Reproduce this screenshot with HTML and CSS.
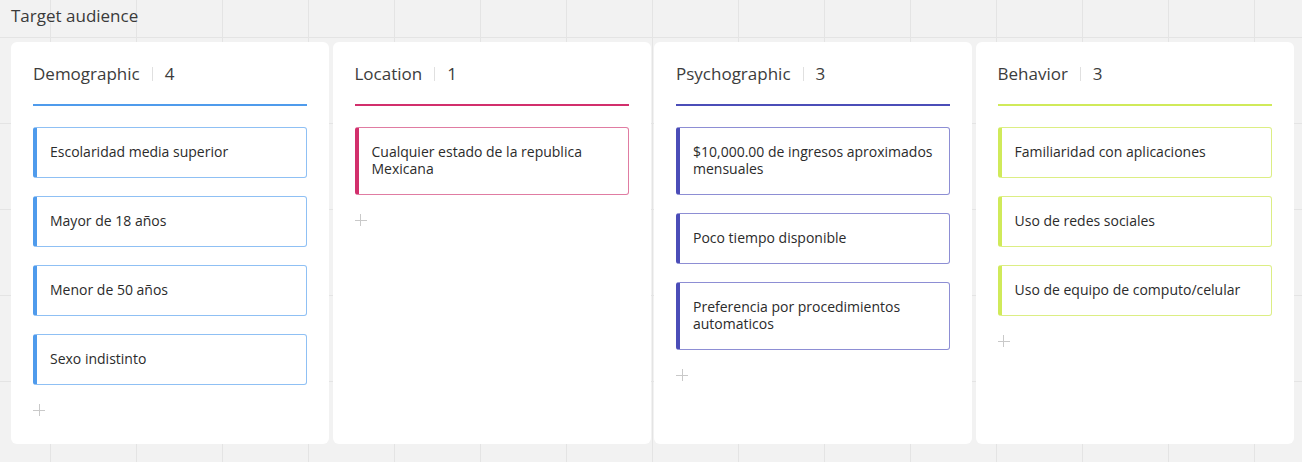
FILE: index.html
```html
<!DOCTYPE html>
<html lang="es">
<head>
<meta charset="utf-8">
<title>Target audience</title>
<link rel="stylesheet" href="styles.css">
</head>
<body>
<div class="frame">
  <div class="frame-title">Target audience</div>
  <div class="board">
    <section class="column col-blue">
      <header class="col-head"><span class="col-name">Demographic</span><span class="sep"></span><span class="count">4</span></header>
      <div class="cards">
        <div class="card">Escolaridad media superior</div>
        <div class="card">Mayor de 18 años</div>
        <div class="card">Menor de 50 años</div>
        <div class="card">Sexo indistinto</div>
      </div>
      <div class="add"></div>
    </section>
    <section class="column col-pink">
      <header class="col-head"><span class="col-name">Location</span><span class="sep"></span><span class="count">1</span></header>
      <div class="cards">
        <div class="card">Cualquier estado de la republica Mexicana</div>
      </div>
      <div class="add"></div>
    </section>
    <section class="column col-indigo">
      <header class="col-head"><span class="col-name">Psychographic</span><span class="sep"></span><span class="count">3</span></header>
      <div class="cards">
        <div class="card">$10,000.00 de ingresos aproximados mensuales</div>
        <div class="card">Poco tiempo disponible</div>
        <div class="card">Preferencia por procedimientos automaticos</div>
      </div>
      <div class="add"></div>
    </section>
    <section class="column col-lime">
      <header class="col-head"><span class="col-name">Behavior</span><span class="sep"></span><span class="count">3</span></header>
      <div class="cards">
        <div class="card">Familiaridad con aplicaciones</div>
        <div class="card">Uso de redes sociales</div>
        <div class="card">Uso de equipo de computo/celular</div>
      </div>
      <div class="add"></div>
    </section>
  </div>
</div>
</body>
</html>
```

FILE: styles.css
```css
html, body {
  margin: 0;
  padding: 0;
}
body {
  width: 1302px;
  height: 462px;
  overflow: hidden;
  font-family: "Open Sans", "Noto Sans", sans-serif;
  color: #333;
  background-color: #f2f2f2;
  background-image:
    linear-gradient(to right, #e4e4e4 1px, transparent 1px),
    linear-gradient(to bottom, #e4e4e4 1px, transparent 1px);
  background-size: 86px 86px;
  background-position: 50px 37px;
}
.frame {
  display: flex;
  flex-direction: column;
}
.frame-title {
  font-size: 17px;
  line-height: 20px;
  padding: 6px 0 0 11px;
  height: 36px;
  box-sizing: border-box;
  color: #3a3a3a;
}
.board {
  display: flex;
  gap: 3.5px;
  padding: 6px 8.5px 0 11px;
}
.column {
  flex: 1;
  height: 402px;
  background: #fff;
  border-radius: 6px;
  padding: 22px 22px 0 22px;
  box-sizing: border-box;
  display: flex;
  flex-direction: column;
}
.col-head {
  display: flex;
  align-items: center;
  height: 20px;
  padding-bottom: 20px;
  border-bottom: 2px solid var(--accent);
  font-size: 17px;
  color: #3c3c3c;
}
.col-name {
  line-height: 20px;
}
.sep {
  width: 1px;
  height: 14px;
  background: #e0e0e0;
  margin: 0 12px 0 12px;
}
.count {
  line-height: 20px;
}
.cards {
  display: flex;
  flex-direction: column;
  gap: 18px;
  margin-top: 21px;
}
.card {
  border: 1px solid var(--soft);
  border-left: 4px solid var(--accent);
  border-radius: 3px;
  padding: 15px 14px 17px 13px;
  font-size: 14px;
  line-height: 17px;
  color: #2b2b2b;
}
.add {
  position: relative;
  width: 12px;
  height: 12px;
  margin: 19px 0 0 0;
}
.add::before,
.add::after {
  content: "";
  position: absolute;
  background: #c9c9c9;
}
.add::before {
  left: 0;
  top: 5.5px;
  width: 12px;
  height: 1px;
}
.add::after {
  left: 5.5px;
  top: 0;
  width: 1px;
  height: 12px;
}
.col-blue { --accent: #4f9bec; --soft: #8fc0f4; }
.col-pink { --accent: #d22f6c; --soft: #e07ca2; }
.col-indigo { --accent: #4b4db8; --soft: #8d8ed4; }
.col-lime { --accent: #d0ea5a; --soft: #dcee84; }
```
